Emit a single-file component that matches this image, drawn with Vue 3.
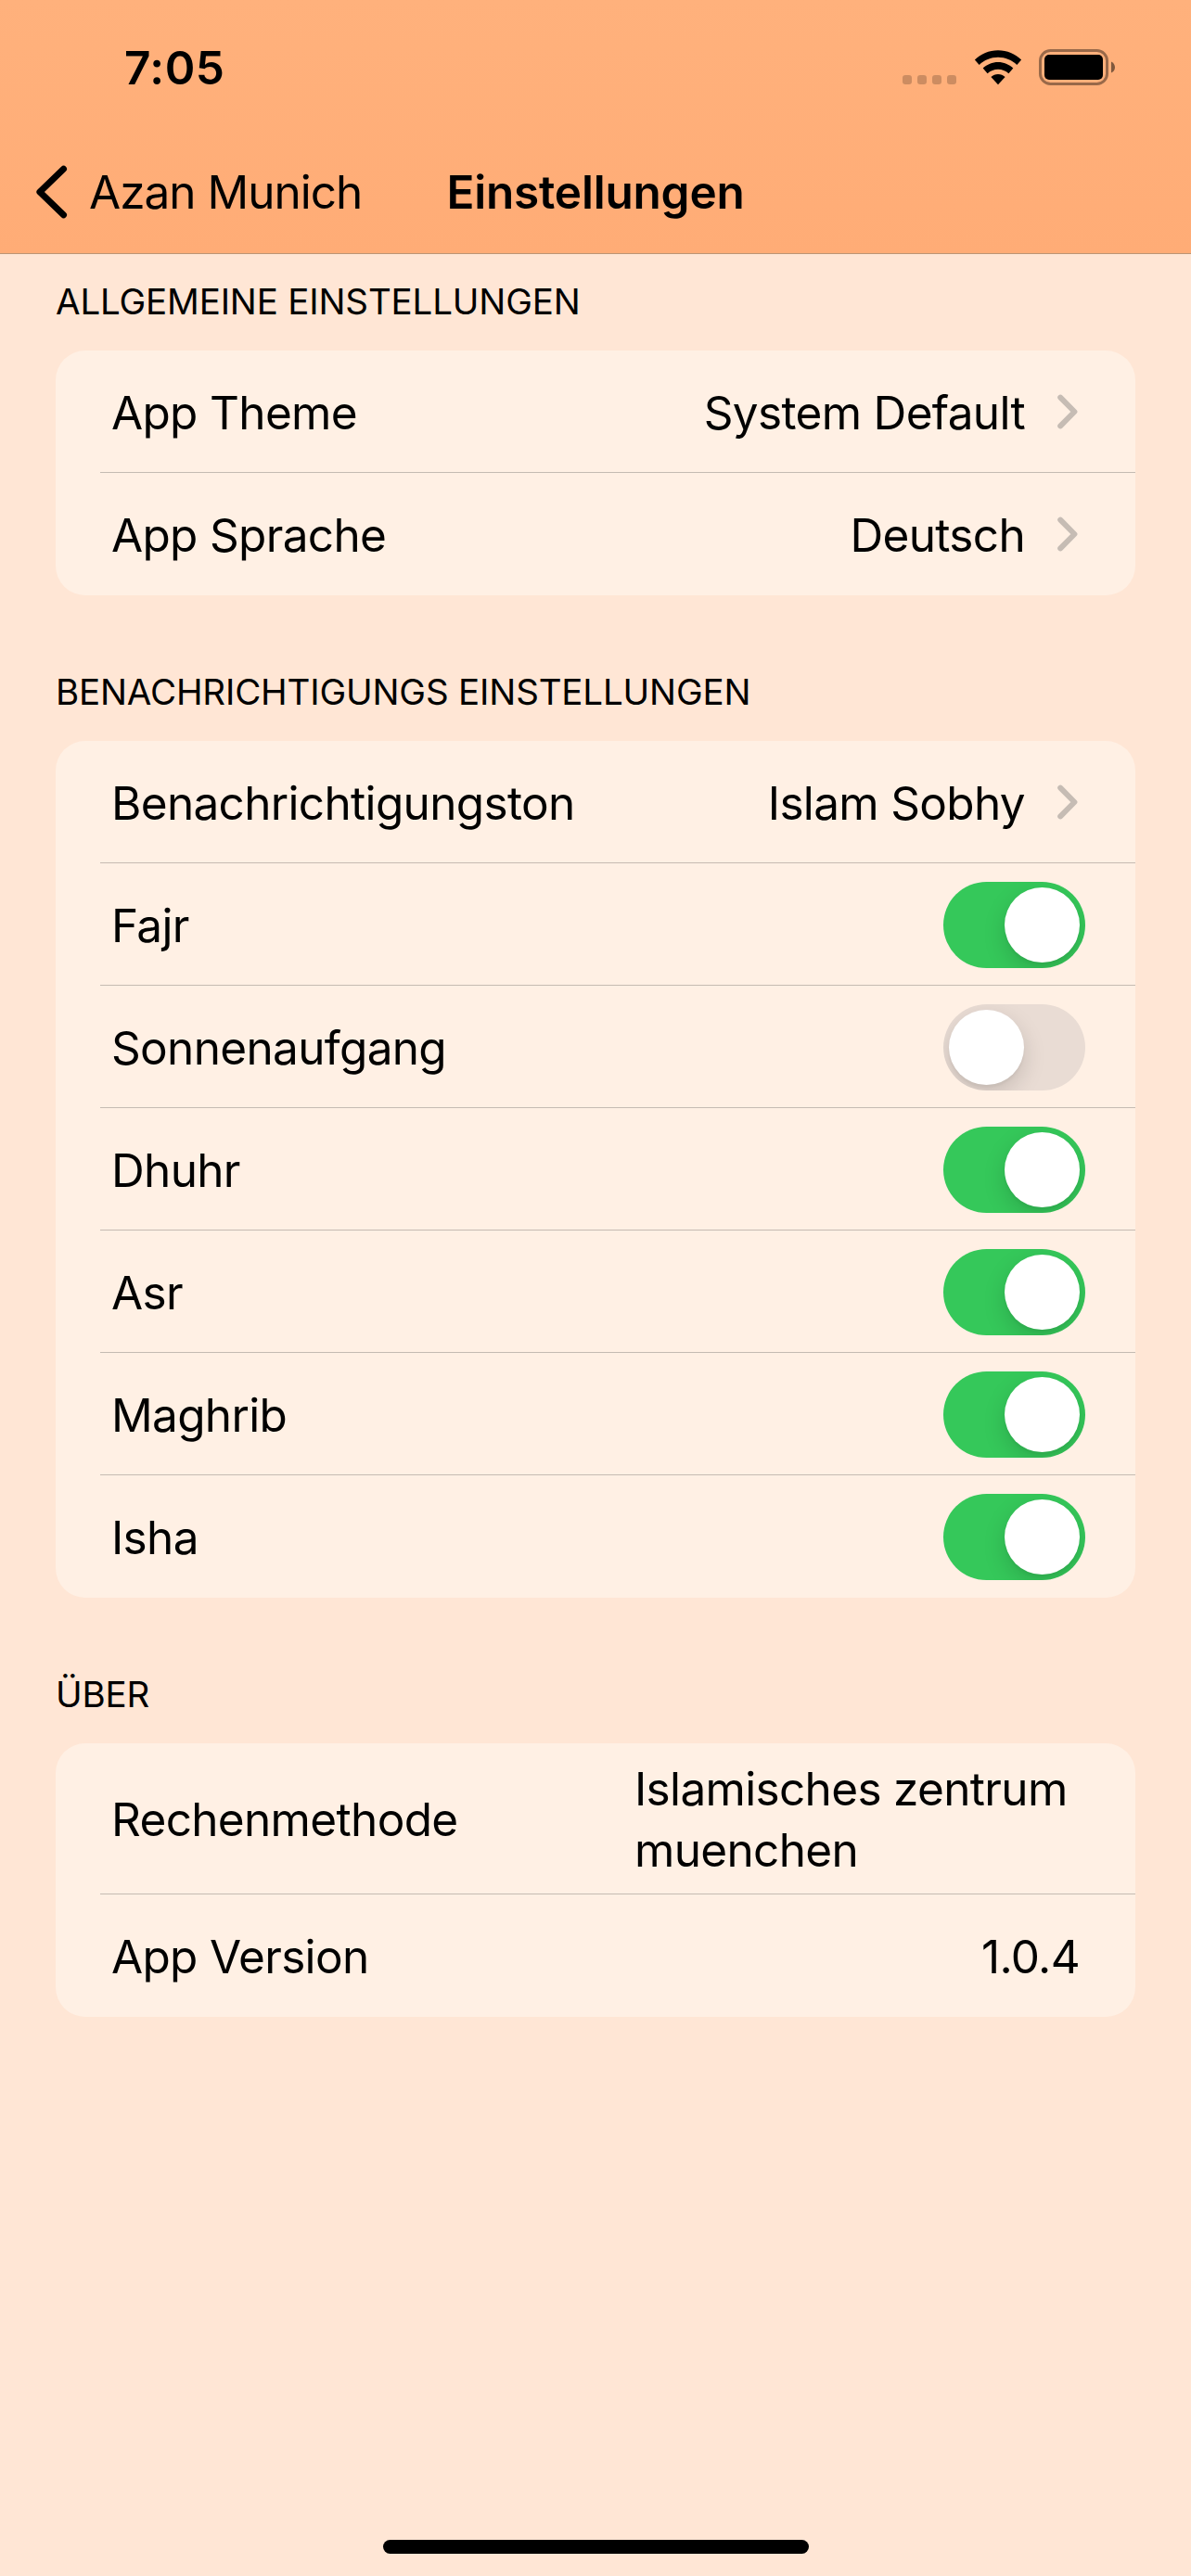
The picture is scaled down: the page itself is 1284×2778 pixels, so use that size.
<script setup>
import { ref } from 'vue'

const sections = ref([
  {
    title: 'ALLGEMEINE EINSTELLUNGEN',
    rows: [
      { label: 'App Theme', type: 'link', value: 'System Default' },
      { label: 'App Sprache', type: 'link', value: 'Deutsch' },
    ],
  },
  {
    title: 'BENACHRICHTIGUNGS EINSTELLUNGEN',
    rows: [
      { label: 'Benachrichtigungston', type: 'link', value: 'Islam Sobhy' },
      { label: 'Fajr', type: 'toggle', on: true },
      { label: 'Sonnenaufgang', type: 'toggle', on: false },
      { label: 'Dhuhr', type: 'toggle', on: true },
      { label: 'Asr', type: 'toggle', on: true },
      { label: 'Maghrib', type: 'toggle', on: true },
      { label: 'Isha', type: 'toggle', on: true },
    ],
  },
  {
    title: 'ÜBER',
    rows: [
      { label: 'Rechenmethode', type: 'long', value: 'Islamisches zentrum muenchen' },
      { label: 'App Version', type: 'text', value: '1.0.4' },
    ],
  },
])
</script>

<template>
  <div class="screen">
    <header class="header">
      <div class="status">
        <span class="time">7:05</span>
        <div class="indicators">
          <div class="dots"><i v-for="n in 4" :key="n"></i></div>
          <svg class="wifi" width="52" height="38" viewBox="0 0 52 38">
            <path d="M26 0.2C35.7 0.2 44.6 4 51.1 10.5L46.3 15.9C40.9 10.9 33.8 7.8 26 7.8S11.1 10.9 5.7 15.9L0.9 10.5C7.4 4 16.3 0.2 26 0.2Z" />
            <path d="M26 13C32.1 13 37.8 15.4 42.3 19.6L37.4 25.2C34.3 22.4 30.2 20.8 26 20.8S17.7 22.4 14.6 25.2L9.7 19.6C14.2 15.4 19.9 13 26 13Z" />
            <path d="M26 26C28.9 26 31.5 27.1 33.6 29L26 37.3L18.4 29C20.5 27.1 23.1 26 26 26Z" />
          </svg>
          <svg class="battery" width="83" height="39" viewBox="0 0 83 39">
            <rect x="1.5" y="1.5" width="72" height="36" rx="11" fill="none" stroke="#000" stroke-opacity="0.4" stroke-width="3" />
            <rect x="6" y="6" width="63" height="27" rx="5" />
            <path d="M78 13.4C80.5 14.4 82 16.8 82 19.5S80.5 24.6 78 25.6Z" fill-opacity="0.5" />
          </svg>
        </div>
      </div>
      <nav class="nav">
        <a class="back">
          <svg width="36" height="60" viewBox="0 0 36 60">
            <path d="M30.5 5.3L4.9 30L30.5 54.7" fill="none" stroke="#000" stroke-width="7" stroke-linecap="round" stroke-linejoin="round" />
          </svg>
          <span>Azan Munich</span>
        </a>
        <h1 class="title">Einstellungen</h1>
      </nav>
    </header>

    <main class="content">
      <section v-for="s in sections" :key="s.title" class="group">
        <h2 class="group-title">{{ s.title }}</h2>
        <div class="card">
          <div v-for="r in s.rows" :key="r.label" class="row" :class="r.type">
            <span class="label">{{ r.label }}</span>
            <span v-if="r.value" class="value">{{ r.value }}</span>
            <svg v-if="r.type === 'link'" class="chevron" width="24" height="38" viewBox="0 0 24 38">
              <path d="M4.2 3.6L19.4 19L4.2 34.4" />
            </svg>
            <button v-if="r.type === 'toggle'" class="switch" :class="{ on: r.on }" @click="r.on = !r.on">
              <span class="knob"></span>
            </button>
          </div>
        </div>
      </section>
    </main>

    <div class="home"></div>
  </div>
</template>

<style>
body {
  background: #ffe6d5;
}
</style>

<style scoped>
.screen {
  display: flex;
  flex-direction: column;
  box-sizing: border-box;
  width: 1284px;
  height: 2778px;
  overflow: hidden;
  background: #ffe6d5;
  color: #000;
  font-family: Inter, "Liberation Sans", sans-serif;
  font-size: 49.5px;
}
.header {
  flex: none;
  box-sizing: border-box;
  height: 274px;
  border-bottom: 1px solid #bb9575;
  background: linear-gradient(#ffb17c, #ffac76);
}
.status {
  display: flex;
  justify-content: space-between;
  height: 141px;
  padding: 0 81px 0 134px;
}
.time {
  margin-top: 43px;
  line-height: 60px;
  font-weight: 600;
  letter-spacing: 0.5px;
}
.indicators {
  display: flex;
  align-items: flex-start;
}
.dots {
  display: flex;
  gap: 6px;
  margin: 81px 19px 0 0;
}
.dots i {
  width: 10px;
  height: 10px;
  border-radius: 3px;
  background: rgba(0, 0, 0, 0.2);
}
.wifi {
  margin: 54px 18px 0 0;
}
.battery {
  margin-top: 53px;
}
.nav {
  display: grid;
  grid-template-columns: 1fr auto 1fr;
  align-items: center;
  height: 132px;
}
.back {
  display: flex;
  align-items: center;
  gap: 22px;
  padding-left: 38px;
  line-height: 60px;
  letter-spacing: -1px;
}
.title {
  margin: 0;
  font-size: inherit;
  font-weight: 600;
  line-height: 60px;
  letter-spacing: -0.2px;
}
.content {
  flex: 1;
  padding: 22px 60px 0;
}
.group {
  margin-bottom: 63px;
}
.group-title {
  margin: 0;
  height: 82px;
  padding-top: 4px;
  box-sizing: border-box;
  font-size: 38.5px;
  font-weight: 400;
  line-height: 50px;
  letter-spacing: -0.16px;
  white-space: nowrap;
}
.group + .group .group-title {
  height: 94px;
  padding-top: 16px;
}
.card {
  overflow: hidden;
  border-radius: 32px;
  background: #fff0e4;
}
.row {
  display: flex;
  align-items: center;
  box-sizing: border-box;
  height: 132px;
  padding: 0 60px;
  line-height: 66px;
  letter-spacing: -0.67px;
  background: linear-gradient(#c5bbb2, #c5bbb2) 48px 100% / 100% 1px no-repeat;
}
.row:last-child {
  background: none;
}
.label {
  flex: 1;
  margin-top: 2px;
  white-space: nowrap;
}
.value {
  margin-top: 2px;
}
.row.link {
  padding-right: 61px;
}
.chevron {
  margin-left: 34px;
  fill: none;
  stroke: #c6bcb4;
  stroke-width: 6;
  stroke-linecap: round;
  stroke-linejoin: round;
}
.row.long {
  height: 163px;
}
.long .label,
.long .value {
  margin-top: 0;
}
.long .value {
  width: 480px;
}
.row.toggle {
  padding-right: 54px;
}
.switch {
  display: flex;
  box-sizing: border-box;
  width: 153px;
  height: 93px;
  margin-top: 1px;
  padding: 6px;
  border: 0;
  border-radius: 47px;
  overflow: hidden;
  background: #e9dcd4;
}
.switch.on {
  justify-content: flex-end;
  background: #35c85a;
}
.knob {
  width: 81px;
  height: 81px;
  border-radius: 50%;
  background: #fff;
  box-shadow: 0 9px 24px rgba(0, 0, 0, 0.15), 0 3px 3px rgba(0, 0, 0, 0.04);
}
.home {
  width: 459px;
  height: 15px;
  margin: 0 auto 24px;
  border-radius: 8px;
  background: #000;
}
</style>
